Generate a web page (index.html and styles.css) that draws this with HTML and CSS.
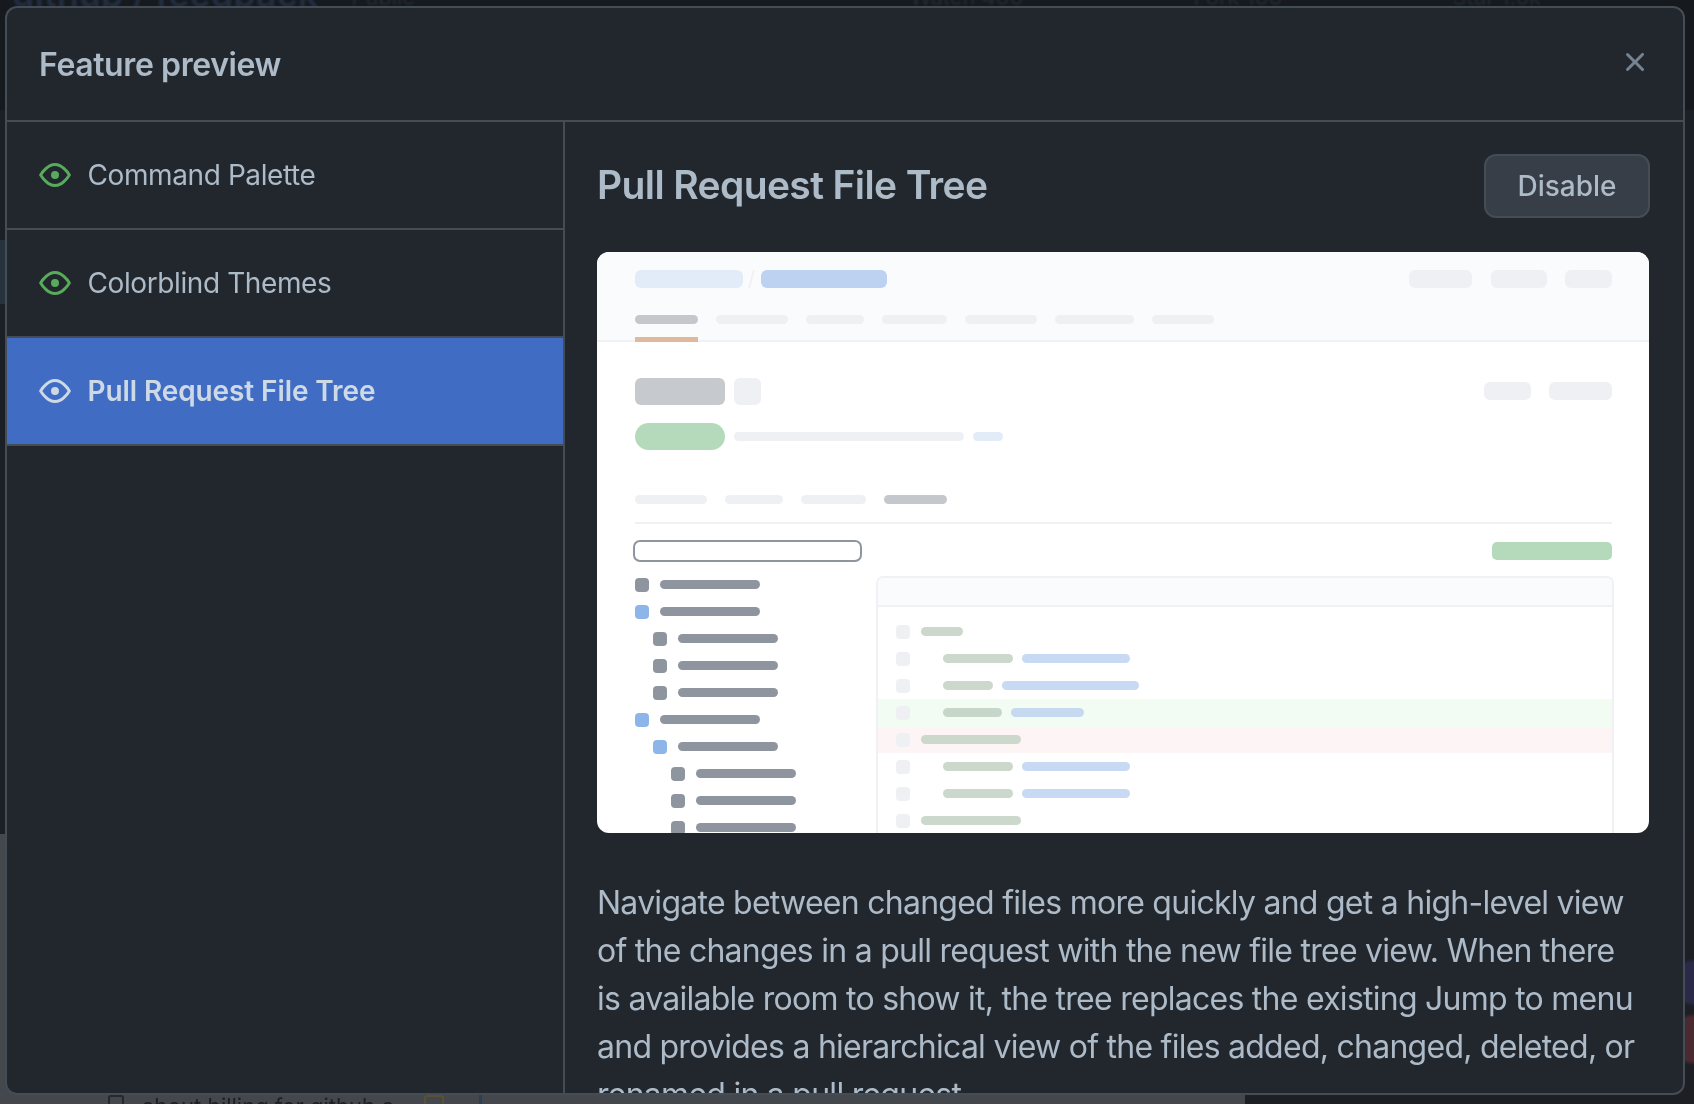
FILE: index.html
```html
<!DOCTYPE html>
<html lang="en">
<head>
  <meta charset="UTF-8" />
  <title>Feature preview</title>
  <link rel="stylesheet" href="styles.css">
</head>
<body>

  <!-- page dimmed behind the dialog -->
  <div class="backdrop">
    <div class="repo-bar">
      <span class="repo-name">github / feedback</span>
      <span class="repo-tag">Public</span>
      <span class="repo-stats">
        <span>Watch 400</span>
        <span>Fork 100</span>
        <span>Star 1.6k</span>
      </span>
    </div>
    <div class="page-mid"><div class="nav-mark"></div></div>
    <div class="page-foot">
      <span class="foot-icon"></span>
      <span class="foot-text">about billing for github a</span>
      <span class="foot-box"></span>
      <span class="foot-rule"></span>
      <span class="foot-photo"></span>
    </div>
  </div>

  <div class="dialog">
    <header class="dialog-head">
      <h1>Feature preview</h1>
      <svg class="close" viewBox="0 0 16 16" width="32" height="32"><path d="M3.72 3.72a.75.75 0 0 1 1.06 0L8 6.94l3.22-3.22a.75.75 0 1 1 1.06 1.06L9.06 8l3.22 3.22a.75.75 0 1 1-1.06 1.06L8 9.06l-3.22 3.22a.75.75 0 0 1-1.06-1.06L6.94 8 3.72 4.78a.75.75 0 0 1 0-1.06Z"/></svg>
    </header>

    <div class="dialog-body">
      <nav class="sidebar">
        <a class="item">
          <svg class="eye" viewBox="0 0 16 16" width="32" height="32"><path d="M8 2c1.98 0 3.67 1.02 4.93 2.16a12.8 12.8 0 0 1 2.95 3.6c.08.16.08.34 0 .5a12.8 12.8 0 0 1-2.95 3.58C11.67 12.98 9.98 14 8 14s-3.67-1.02-4.93-2.16a12.8 12.8 0 0 1-2.95-3.58.55.55 0 0 1 0-.52 12.8 12.8 0 0 1 2.95-3.58C4.33 3.02 6.02 2 8 2ZM1.68 8a11.6 11.6 0 0 0 2.4 2.78C5.2 11.78 6.53 12.5 8 12.5s2.8-.72 3.92-1.72A11.6 11.6 0 0 0 14.32 8a11.6 11.6 0 0 0-2.4-2.78C10.8 4.22 9.47 3.5 8 3.5s-2.8.72-3.92 1.72A11.6 11.6 0 0 0 1.68 8ZM8 10a2 2 0 1 1 0-4 2 2 0 0 1 0 4Z"/></svg>
          <span>Command Palette</span>
        </a>
        <a class="item">
          <svg class="eye" viewBox="0 0 16 16" width="32" height="32"><path d="M8 2c1.98 0 3.67 1.02 4.93 2.16a12.8 12.8 0 0 1 2.95 3.6c.08.16.08.34 0 .5a12.8 12.8 0 0 1-2.95 3.58C11.67 12.98 9.98 14 8 14s-3.67-1.02-4.93-2.16a12.8 12.8 0 0 1-2.95-3.58.55.55 0 0 1 0-.52 12.8 12.8 0 0 1 2.95-3.58C4.33 3.02 6.02 2 8 2ZM1.68 8a11.6 11.6 0 0 0 2.4 2.78C5.2 11.78 6.53 12.5 8 12.5s2.8-.72 3.92-1.72A11.6 11.6 0 0 0 14.32 8a11.6 11.6 0 0 0-2.4-2.78C10.8 4.22 9.47 3.5 8 3.5s-2.8.72-3.92 1.72A11.6 11.6 0 0 0 1.68 8ZM8 10a2 2 0 1 1 0-4 2 2 0 0 1 0 4Z"/></svg>
          <span>Colorblind Themes</span>
        </a>
        <a class="item active">
          <svg class="eye" viewBox="0 0 16 16" width="32" height="32"><path d="M8 2c1.98 0 3.67 1.02 4.93 2.16a12.8 12.8 0 0 1 2.95 3.6c.08.16.08.34 0 .5a12.8 12.8 0 0 1-2.95 3.58C11.67 12.98 9.98 14 8 14s-3.67-1.02-4.93-2.16a12.8 12.8 0 0 1-2.95-3.58.55.55 0 0 1 0-.52 12.8 12.8 0 0 1 2.95-3.58C4.33 3.02 6.02 2 8 2ZM1.68 8a11.6 11.6 0 0 0 2.4 2.78C5.2 11.78 6.53 12.5 8 12.5s2.8-.72 3.92-1.72A11.6 11.6 0 0 0 14.32 8a11.6 11.6 0 0 0-2.4-2.78C10.8 4.22 9.47 3.5 8 3.5s-2.8.72-3.92 1.72A11.6 11.6 0 0 0 1.68 8ZM8 10a2 2 0 1 1 0-4 2 2 0 0 1 0 4Z"/></svg>
          <span>Pull Request File Tree</span>
        </a>
      </nav>

      <section class="detail">
        <div class="detail-head">
          <h2>Pull Request File Tree</h2>
          <button type="button">Disable</button>
        </div>

        <!-- skeleton picture of the PR page, viewBox uses page coordinates -->
        <svg class="preview" viewBox="597 252 1052 581">
          <rect x="597" y="252" width="1052" height="581" fill="#fff"/>
          <rect x="597" y="252" width="1052" height="88" fill="#fafbfd"/>
          <rect x="597" y="340" width="1052" height="2" fill="#f0f1f4"/>

          <g fill="#e2ecf8"><rect x="635" y="270" width="108" height="18" rx="6"/></g>
          <path d="M749 288l5-18" stroke="#f0f1f4" stroke-width="2"/>
          <rect x="761" y="270" width="126" height="18" rx="6" fill="#bdd2f1"/>
          <g fill="#eff0f3">
            <rect x="1409" y="270" width="63" height="18" rx="6"/>
            <rect x="1491" y="270" width="56" height="18" rx="6"/>
            <rect x="1565" y="270" width="47" height="18" rx="6"/>
            <rect x="716" y="315" width="72" height="9" rx="4.5"/>
            <rect x="806" y="315" width="58" height="9" rx="4.5"/>
            <rect x="882" y="315" width="65" height="9" rx="4.5"/>
            <rect x="965" y="315" width="72" height="9" rx="4.5"/>
            <rect x="1055" y="315" width="79" height="9" rx="4.5"/>
            <rect x="1152" y="315" width="62" height="9" rx="4.5"/>
          </g>
          <rect x="635" y="315" width="63" height="9" rx="4.5" fill="#c4c7cc"/>
          <rect x="635" y="337" width="63" height="5" fill="#e0b99c"/>

          <rect x="635" y="378" width="90" height="27" rx="6" fill="#c6c9cd"/>
          <g fill="#eff0f3">
            <rect x="734" y="378" width="27" height="27" rx="6"/>
            <rect x="1484" y="382" width="47" height="18" rx="6"/>
            <rect x="1549" y="382" width="63" height="18" rx="6"/>
            <rect x="734" y="432" width="230" height="9" rx="4.5"/>
          </g>
          <rect x="635" y="423" width="90" height="27" rx="13.5" fill="#b5dabb"/>
          <rect x="973" y="432" width="30" height="9" rx="4.5" fill="#e2ecf8"/>

          <g fill="#eff0f3">
            <rect x="635" y="495" width="72" height="9" rx="4.5"/>
            <rect x="725" y="495" width="58" height="9" rx="4.5"/>
            <rect x="801" y="495" width="65" height="9" rx="4.5"/>
          </g>
          <rect x="884" y="495" width="63" height="9" rx="4.5" fill="#c4c7cc"/>
          <rect x="635" y="522" width="977" height="2" fill="#f0f1f4"/>

          <rect x="634" y="541" width="227" height="20" rx="6" fill="#fff" stroke="#8f959e" stroke-width="2"/>
          <rect x="1492" y="542" width="120" height="18" rx="5" fill="#b5dabb"/>

          <!-- file tree -->
          <g fill="#8f959e">
            <rect x="635" y="578" width="14" height="14" rx="4"/><rect x="660" y="580" width="100" height="9" rx="4.5"/>
            <rect x="660" y="607" width="100" height="9" rx="4.5"/>
            <rect x="653" y="632" width="14" height="14" rx="4"/><rect x="678" y="634" width="100" height="9" rx="4.5"/>
            <rect x="653" y="659" width="14" height="14" rx="4"/><rect x="678" y="661" width="100" height="9" rx="4.5"/>
            <rect x="653" y="686" width="14" height="14" rx="4"/><rect x="678" y="688" width="100" height="9" rx="4.5"/>
            <rect x="660" y="715" width="100" height="9" rx="4.5"/>
            <rect x="678" y="742" width="100" height="9" rx="4.5"/>
            <rect x="671" y="767" width="14" height="14" rx="4"/><rect x="696" y="769" width="100" height="9" rx="4.5"/>
            <rect x="671" y="794" width="14" height="14" rx="4"/><rect x="696" y="796" width="100" height="9" rx="4.5"/>
            <rect x="671" y="821" width="14" height="14" rx="4"/><rect x="696" y="823" width="100" height="9" rx="4.5"/>
          </g>
          <g fill="#8eb5e9">
            <rect x="635" y="605" width="14" height="14" rx="4"/>
            <rect x="635" y="713" width="14" height="14" rx="4"/>
            <rect x="653" y="740" width="14" height="14" rx="4"/>
          </g>

          <!-- diff box -->
          <rect x="877" y="577" width="736" height="270" rx="6" fill="#fff" stroke="#f0f1f4" stroke-width="2"/>
          <path d="M878 606v-23a5 5 0 0 1 5-5h724a5 5 0 0 1 5 5v23z" fill="#fafbfd"/>
          <rect x="877" y="605" width="736" height="2" fill="#f0f1f4"/>
          <rect x="878" y="699" width="734" height="28" fill="#f2fcf3"/>
          <rect x="878" y="727" width="734" height="26" fill="#fdf5f5"/>
          <g fill="#eff0f3">
            <rect x="896" y="625" width="14" height="14" rx="4"/>
            <rect x="896" y="652" width="14" height="14" rx="4"/>
            <rect x="896" y="679" width="14" height="14" rx="4"/>
            <rect x="896" y="706" width="14" height="14" rx="4"/>
            <rect x="896" y="733" width="14" height="14" rx="4"/>
            <rect x="896" y="760" width="14" height="14" rx="4"/>
            <rect x="896" y="787" width="14" height="14" rx="4"/>
            <rect x="896" y="814" width="14" height="14" rx="4"/>
          </g>
          <g fill="#cdd8cd">
            <rect x="921" y="627" width="42" height="9" rx="4.5"/>
            <rect x="943" y="654" width="70" height="9" rx="4.5"/>
            <rect x="943" y="681" width="50" height="9" rx="4.5"/>
            <rect x="943" y="708" width="59" height="9" rx="4.5" fill="#c6d6c8"/>
            <rect x="921" y="735" width="100" height="9" rx="4.5"/>
            <rect x="943" y="762" width="70" height="9" rx="4.5"/>
            <rect x="943" y="789" width="70" height="9" rx="4.5"/>
            <rect x="921" y="816" width="100" height="9" rx="4.5"/>
          </g>
          <g fill="#c8d9f3">
            <rect x="1022" y="654" width="108" height="9" rx="4.5"/>
            <rect x="1002" y="681" width="137" height="9" rx="4.5"/>
            <rect x="1011" y="708" width="73" height="9" rx="4.5" fill="#c5d9f1"/>
            <rect x="1022" y="762" width="108" height="9" rx="4.5"/>
            <rect x="1022" y="789" width="108" height="9" rx="4.5"/>
          </g>
        </svg>

        <p class="blurb">Navigate between changed files more quickly and get a high-level view of the changes in a pull request with the new file tree view. When there is available room to show it, the tree replaces the existing Jump to menu and provides a hierarchical view of the files added, changed, deleted, or renamed in a pull request.</p>
      </section>
    </div>
  </div>

</body>
</html>
```

FILE: styles.css
```css
:root {
  --bg: #22272e;
  --line: #444c56;
  --text: #adbac7;
  --muted: #768390;
  --green: #57ab5a;
  --blue: #406cc4;
}

* {
  box-sizing: border-box;
}

html, body {
  height: 100%;
}

body {
  margin: 0;
  overflow: hidden;
  background-color: #44474b;
  color: var(--text);
  font-family: Inter, 'Noto Sans', sans-serif;
}

/* page behind */
.backdrop {
  display: flex;
  flex-direction: column;
  height: 100%;
}

.repo-bar {
  flex: none;
  display: flex;
  align-items: flex-start;
  height: 110px;
  padding-left: 12px;
  background-color: #16191e;
  color: #262b32;
  font-size: 22px;
  overflow: hidden;
}

.repo-name {
  margin-top: -28px;
  font-size: 36px;
  font-weight: 600;
  color: #222e40;
  filter: blur(1px);
}

.repo-tag {
  margin: -16px 0 0 33px;
  filter: blur(1px);
}

.repo-stats {
  display: flex;
  gap: 170px;
  margin: -16px 0 0 495px;
  filter: blur(1px);
}

.page-mid {
  flex: 1;
  background-color: #1b2027;
}

.nav-mark {
  width: 6px;
  height: 64px;
  margin-top: 130px;
  background-color: #27323f;
}

.page-foot {
  flex: none;
  display: flex;
  align-items: flex-start;
  height: 270px;
  padding: 261px 0 0 108px;
  overflow: hidden;
  color: #1d2025;
  font-size: 22px;
}

.foot-icon {
  width: 16px;
  height: 22px;
  border: 2px solid #26282c;
  border-radius: 3px;
}

.foot-text {
  margin: -2px 0 0 18px;
  filter: blur(0.6px);
}

.foot-box {
  width: 20px;
  height: 20px;
  margin-left: 30px;
  border: 2px solid #5a5136;
  border-radius: 3px;
}

.foot-rule {
  width: 3px;
  height: 14px;
  margin-left: 35px;
  background-color: #2f3d55;
}

.foot-photo {
  margin: -261px 0 0 auto;
  width: 449px;
  height: 270px;
  background-color: #1d1f24;
  background-image:
    radial-gradient(circle at 100% 76%, #4a2a2e 0, #4a2a2e 22px, transparent 26px),
    radial-gradient(circle at 100% 55%, #2a2a48 0, #2a2a48 20px, transparent 24px);
}

/* dialog */
.dialog {
  position: fixed;
  left: 5px;
  top: 6px;
  width: 1680px;
  height: 1089px;
  display: flex;
  flex-direction: column;
  background-color: var(--bg);
  border: 2px solid var(--line);
  border-radius: 12px;
  overflow: hidden;
}

.dialog-head {
  flex: none;
  display: flex;
  justify-content: space-between;
  height: 114px;
  padding: 0 32px;
  border-bottom: 2px solid var(--line);
}

h1 {
  margin: 0;
  font-size: 32px;
  line-height: 114px;
  font-weight: 600;
  letter-spacing: -0.4px;
}

.close {
  margin-top: 38px;
  fill: var(--muted);
}

.dialog-body {
  flex: 1;
  display: flex;
  min-height: 0;
}

.sidebar {
  flex: none;
  width: 558px;
  border-right: 2px solid var(--line);
}

.item {
  display: flex;
  align-items: center;
  gap: 16.5px;
  height: 108px;
  padding-left: 32px;
  font-size: 28px;
  letter-spacing: -0.4px;
  border-bottom: 2px solid var(--line);
}

.eye {
  fill: var(--green);
}

.active {
  background-color: var(--blue);
  color: #cdd9e5;
  font-weight: 600;
  letter-spacing: -0.1px;
}

.active .eye {
  fill: #cdd9e5;
}

.detail {
  flex: 1;
  min-width: 0;
  padding: 32px 32px 0;
}

.detail-head {
  display: flex;
  align-items: center;
  justify-content: space-between;
  height: 64px;
  margin-bottom: 34px;
}

h2 {
  margin: -3px 0 0;
  font-size: 39px;
  font-weight: 600;
  letter-spacing: -0.62px;
}

button {
  width: 166px;
  height: 64px;
  margin-right: 1px;
  background-color: #373e47;
  color: var(--text);
  border: 2px solid var(--line);
  border-radius: 12px;
  font-family: inherit;
  font-size: 28px;
  font-weight: 500;
}

.preview {
  display: block;
  width: 1052px;
  height: 581px;
  border-radius: 12px;
}

.blurb {
  max-width: 1046px;
  margin: 46px 0 0;
  font-size: 32px;
  line-height: 48px;
  letter-spacing: -0.74px;
}
```
